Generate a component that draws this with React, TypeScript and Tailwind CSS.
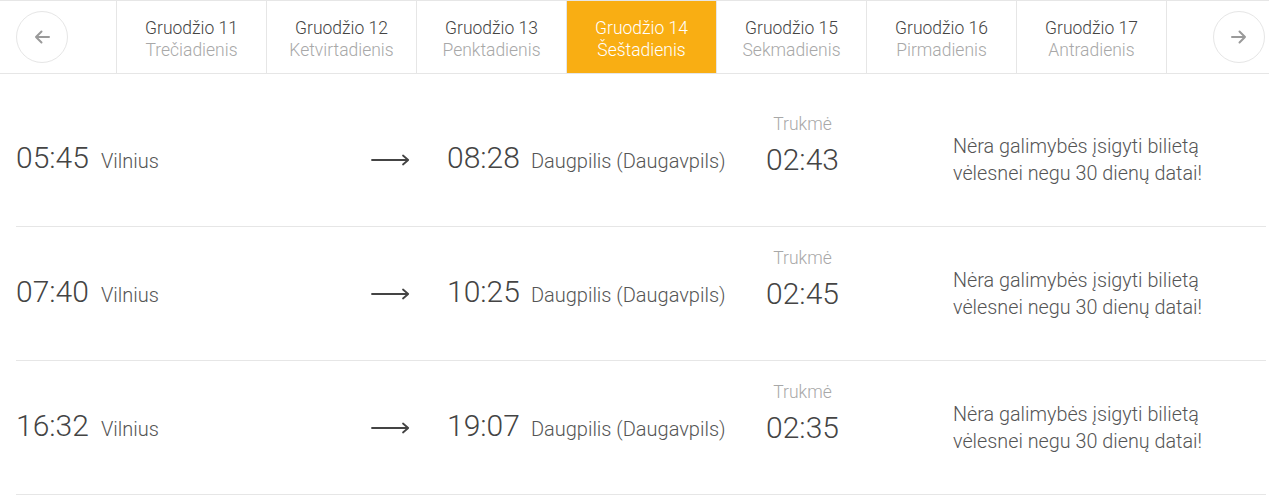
import React from 'react';

const days = [
  { date: 'Gruodžio 11', day: 'Trečiadienis' },
  { date: 'Gruodžio 12', day: 'Ketvirtadienis' },
  { date: 'Gruodžio 13', day: 'Penktadienis' },
  { date: 'Gruodžio 14', day: 'Šeštadienis', active: true },
  { date: 'Gruodžio 15', day: 'Sekmadienis' },
  { date: 'Gruodžio 16', day: 'Pirmadienis' },
  { date: 'Gruodžio 17', day: 'Antradienis' },
];

const trips = [
  { dep: '05:45', arr: '08:28', dur: '02:43' },
  { dep: '07:40', arr: '10:25', dur: '02:45' },
  { dep: '16:32', arr: '19:07', dur: '02:35' },
];

const NavBtn = ({ dir }: { dir: 'left' | 'right' }) => (
  <button className="flex h-[52px] w-[52px] items-center justify-center rounded-full border border-[#e6e6e6] bg-white">
    <svg width="16" height="14" viewBox="0 0 16 14" fill="none" stroke="#9a9a9a" strokeWidth="2" strokeLinecap="round" strokeLinejoin="round">
      {dir === 'left' ? (
        <path d="M15 7H2M7.5 1.5L2 7l5.5 5.5" />
      ) : (
        <path d="M1 7h13M8.5 1.5L14 7l-5.5 5.5" />
      )}
    </svg>
  </button>
);

const LongArrow = () => (
  <svg width="39" height="12" viewBox="0 0 39 12" fill="none" stroke="#444" strokeWidth="1.8" strokeLinecap="round" strokeLinejoin="round">
    <path d="M1 6h36M32 1.5L37.2 6 32 10.5" />
  </svg>
);

export default function App() {
  return (
    <div className="min-h-[495px] bg-white font-['Roboto',sans-serif] font-light text-[#444]">
      {/* date strip */}
      <div className="flex h-[74px] border-y border-[#e6e6e6]">
        <div className="flex w-[116px] items-center pl-4">
          <NavBtn dir="left" />
        </div>
        {days.map((d) => (
          <div
            key={d.date}
            className={`flex w-[150px] flex-col items-center justify-center border-l border-[#e6e6e6] pt-[3px] text-[17.5px] leading-[22px] ${
              d.active ? 'bg-[#f9ae13] text-white' : ''
            }`}
          >
            <span className={d.active ? 'text-white' : 'text-[#444]'}>{d.date}</span>
            <span className={d.active ? 'text-white' : 'text-[#a8a8a8]'}>{d.day}</span>
          </div>
        ))}
        <div className="flex flex-1 items-center justify-end border-l border-[#e6e6e6] pr-1">
          <NavBtn dir="right" />
        </div>
      </div>

      {/* trips */}
      <div className="ml-4 mr-[3px] pt-[19px]">
        {trips.map((t) => (
          <div key={t.dep} className="flex h-[134px] items-center border-b border-[#e6e6e6]">
            <div className="flex w-[355px] items-baseline">
              <span className="text-[30px] leading-none">{t.dep}</span>
              <span className="ml-3 text-[20px] text-[#555]">Vilnius</span>
            </div>
            <div className="flex w-[76px] items-center">
              <LongArrow />
            </div>
            <div className="flex w-[319px] items-baseline">
              <span className="text-[30px] leading-none">{t.arr}</span>
              <span className="ml-[11px] text-[20px] text-[#555]">Daugpilis (Daugavpils)</span>
            </div>
            <div className="mb-[30px] flex w-[73px] flex-col items-center">
              <span className="text-[17.5px] leading-[20px] text-[#a8a8a8]">Trukmė</span>
              <span className="mt-[11px] text-[30px] leading-none">{t.dur}</span>
            </div>
            <div className="ml-[114px] text-[19.8px] leading-[27px] text-[#555]">
              <div>Nėra galimybės įsigyti bilietą</div>
              <div>vėlesnei negu 30 dienų datai!</div>
            </div>
          </div>
        ))}
      </div>
    </div>
  );
}
